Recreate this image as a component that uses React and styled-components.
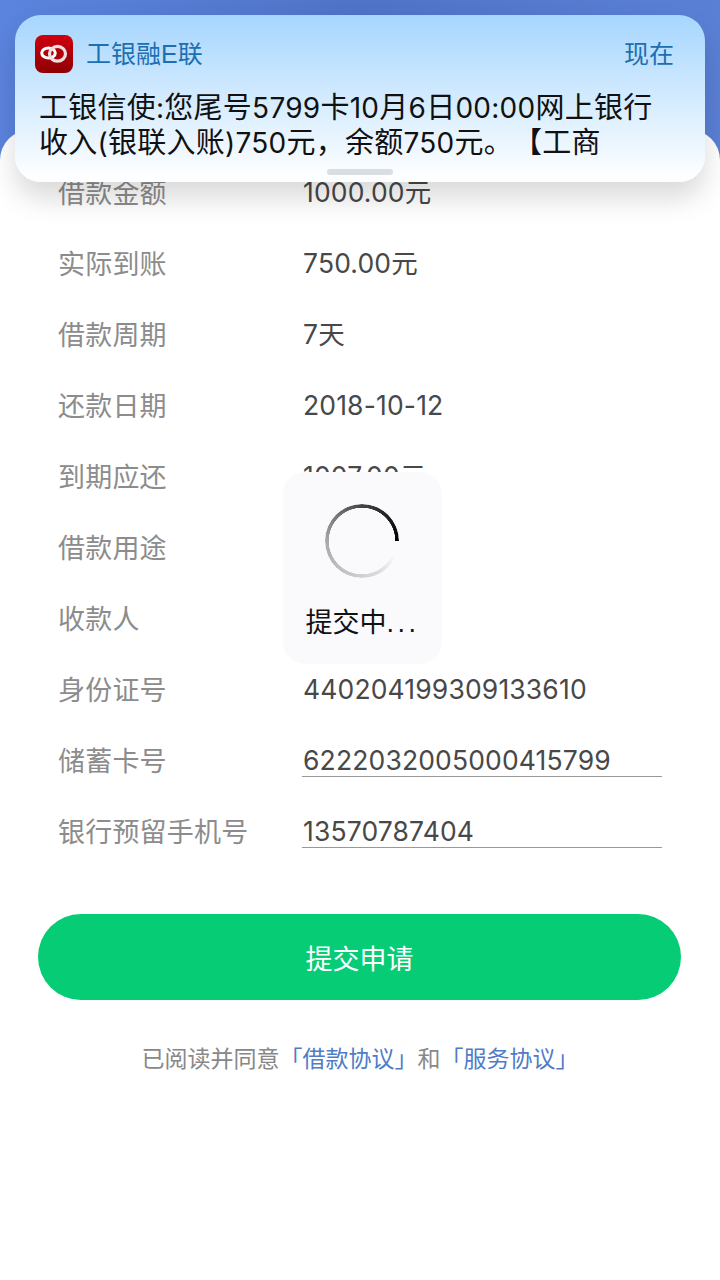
import React from "react";
import styled, { createGlobalStyle } from "styled-components";

const GlobalStyle = createGlobalStyle`
  html, body { margin: 0; padding: 0; }
  body { font-family: "Liberation Sans", "Noto Sans CJK SC", sans-serif; }
`;

const Page = styled.div`
  position: relative;
  width: 720px;
  height: 1280px;
  overflow: hidden;
  padding-top: 130px;
  box-sizing: border-box;
  background: linear-gradient(90deg, #5b84de, #4f73c6 50%, #5a80d6);
`;

const Sheet = styled.main`
  height: 1150px;
  box-sizing: border-box;
  padding-top: 26px;
  background: #fff;
  border-radius: 30px 30px 0 0;
`;

const Row = styled.div`
  display: flex;
  align-items: center;
  height: 71px;
  padding-left: 58px;
  font-size: 27px;
`;

const Label = styled.span`
  width: 244px;
  color: #8c8c8c;
  letter-spacing: 0.2px;
`;

const Value = styled.span`
  box-sizing: border-box;
  width: 360px;
  height: 35px;
  line-height: 37px;
  padding-left: 1px;
  font-family: Inter, "Noto Sans CJK SC", sans-serif;
  font-size: 26.5px;
  letter-spacing: 0.15px;
  color: #484848;
  border-bottom: ${(p) => (p.$underlined ? "1px solid #999" : "none")};
`;

const SubmitButton = styled.button`
  display: block;
  width: 643px;
  height: 86px;
  margin: 48px 0 0 38px;
  border: none;
  border-radius: 43px;
  background: #06cc76;
  color: #fff;
  font: inherit;
  font-size: 27px;
`;

const Agreement = styled.p`
  margin: 41px 0 0;
  text-align: center;
  font-size: 23px;
  line-height: 36px;
  color: #888;
`;

const AgreementLink = styled.span`
  color: #4f7cc7;
`;

const Notification = styled.section`
  position: absolute;
  top: 15px;
  left: 15px;
  width: 690px;
  height: 167px;
  box-sizing: border-box;
  padding: 20px 31px 0 20px;
  border-radius: 26px;
  background: linear-gradient(180deg, #a6d6fe, #fdfeff 96%);
  box-shadow: 0 16px 28px rgba(0, 0, 0, 0.15);
`;

const NotificationHead = styled.div`
  display: flex;
  align-items: center;
  height: 38px;
  color: #1b6fb2;
  font-size: 25px;
  line-height: 34px;
`;

const AppName = styled.span`
  flex: 1;
  margin-left: 13px;
`;

const NotificationBody = styled.p`
  margin: 18px 0 0 4px;
  font-size: 29px;
  line-height: 35px;
  letter-spacing: 0.25px;
  color: #111;
  white-space: nowrap;
  text-spacing-trim: space-all;
`;

const Num = styled.span`
  font-family: Inter, sans-serif;
  font-size: 28px;
`;

const Grabber = styled.div`
  position: absolute;
  left: 312px;
  bottom: 7px;
  width: 66px;
  height: 6px;
  border-radius: 3px;
  background: #d9dee2;
`;

const LoadingToast = styled.div`
  position: absolute;
  top: 472px;
  left: 283px;
  width: 159px;
  height: 192px;
  display: flex;
  flex-direction: column;
  align-items: center;
  border-radius: 22px;
  background: #fafafc;
`;

const Spinner = styled.div`
  width: 74px;
  height: 74px;
  margin: 32px 1px 0 0;
  border-radius: 50%;
  background: conic-gradient(from 90deg, transparent 0deg 25deg, #ddd 60deg, #a8a8a8 180deg, #444 270deg, #000 360deg);
  mask: radial-gradient(circle, transparent 33px, #000 33.5px);
`;

const ToastText = styled.span`
  margin-top: 23px;
  font-size: 27px;
  color: #111;
`;

const ToastDots = styled.span`
  letter-spacing: 3.5px;
`;

const rows = [
  ["借款金额", "1000.00元"],
  ["实际到账", "750.00元"],
  ["借款周期", "7天"],
  ["还款日期", "2018-10-12"],
  ["到期应还", "1007.00元"],
  ["借款用途", ""],
  ["收款人", ""],
  ["身份证号", "440204199309133610"],
  ["储蓄卡号", "6222032005000415799", true],
  ["银行预留手机号", "13570787404", true],
];

const AppLogo = () => (
  <svg width="38" height="38" viewBox="0 0 38 38">
    <defs>
      <linearGradient id="logoRed" x1="0" y1="0" x2="0" y2="1">
        <stop offset="0" stopColor="#d0000f" />
        <stop offset="1" stopColor="#8e0004" />
      </linearGradient>
    </defs>
    <rect width="38" height="38" rx="8" fill="url(#logoRed)" />
    <ellipse cx="13.5" cy="18" rx="6.8" ry="5" fill="none" stroke="#fff" strokeWidth="3" />
    <ellipse cx="22.5" cy="18.8" rx="8" ry="7.4" fill="none" stroke="#eee0e0" strokeWidth="3.2" />
  </svg>
);

const App = () => (
  <Page>
    <GlobalStyle />
    <Sheet>
      {rows.map(([label, value, underlined]) => (
        <Row key={label}>
          <Label>{label}</Label>
          <Value $underlined={underlined}>{value}</Value>
        </Row>
      ))}
      <SubmitButton>提交申请</SubmitButton>
      <Agreement>
        已阅读并同意<AgreementLink>「借款协议」</AgreementLink>和<AgreementLink>「服务协议」</AgreementLink>
      </Agreement>
    </Sheet>
    <LoadingToast>
      <Spinner />
      <ToastText>提交中<ToastDots>...</ToastDots></ToastText>
    </LoadingToast>
    <Notification>
      <NotificationHead>
        <AppLogo />
        <AppName>工银融E联</AppName>
        <span>现在</span>
      </NotificationHead>
      <NotificationBody>
        工银信使<Num>:</Num>您尾号<Num>5799</Num>卡<Num>10</Num>月<Num>6</Num>日<Num>00:00</Num>网上银行
        <br />
        收入<Num>(</Num>银联入账<Num>)750</Num>元，余额<Num>750</Num>元。【工商
      </NotificationBody>
      <Grabber />
    </Notification>
  </Page>
);

export default App;
